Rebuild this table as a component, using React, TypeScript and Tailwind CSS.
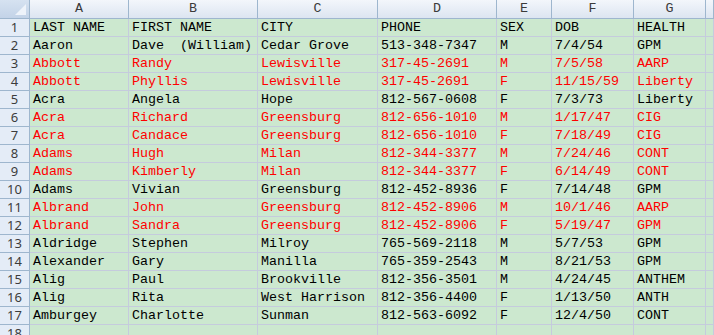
const columns = ['A', 'B', 'C', 'D', 'E', 'F', 'G', ''];

type Row = { cells: string[]; red?: boolean };

const rows: Row[] = [
  { cells: ['LAST NAME', 'FIRST NAME', 'CITY', 'PHONE', 'SEX', 'DOB', 'HEALTH'] },
  { cells: ['Aaron', 'Dave  (William)', 'Cedar Grove', '513-348-7347', 'M', '7/4/54', 'GPM'] },
  { cells: ['Abbott', 'Randy', 'Lewisville', '317-45-2691', 'M', '7/5/58', 'AARP'], red: true },
  { cells: ['Abbott', 'Phyllis', 'Lewisville', '317-45-2691', 'F', '11/15/59', 'Liberty'], red: true },
  { cells: ['Acra', 'Angela', 'Hope', '812-567-0608', 'F', '7/3/73', 'Liberty'] },
  { cells: ['Acra', 'Richard', 'Greensburg', '812-656-1010', 'M', '1/17/47', 'CIG'], red: true },
  { cells: ['Acra', 'Candace', 'Greensburg', '812-656-1010', 'F', '7/18/49', 'CIG'], red: true },
  { cells: ['Adams', 'Hugh', 'Milan', '812-344-3377', 'M', '7/24/46', 'CONT'], red: true },
  { cells: ['Adams', 'Kimberly', 'Milan', '812-344-3377', 'F', '6/14/49', 'CONT'], red: true },
  { cells: ['Adams', 'Vivian', 'Greensburg', '812-452-8936', 'F', '7/14/48', 'GPM'] },
  { cells: ['Albrand', 'John', 'Greensburg', '812-452-8906', 'M', '10/1/46', 'AARP'], red: true },
  { cells: ['Albrand', 'Sandra', 'Greensburg', '812-452-8906', 'F', '5/19/47', 'GPM'], red: true },
  { cells: ['Aldridge', 'Stephen', 'Milroy', '765-569-2118', 'M', '5/7/53', 'GPM'] },
  { cells: ['Alexander', 'Gary', 'Manilla', '765-359-2543', 'M', '8/21/53', 'GPM'] },
  { cells: ['Alig', 'Paul', 'Brookville', '812-356-3501', 'M', '4/24/45', 'ANTHEM'] },
  { cells: ['Alig', 'Rita', 'West Harrison', '812-356-4400', 'F', '1/13/50', 'ANTH'] },
  { cells: ['Amburgey', 'Charlotte', 'Sunman', '812-563-6092', 'F', '12/4/50', 'CONT'] },
  { cells: ['', '', '', '', '', '', ''] },
];

const grid = 'grid grid-cols-[30px_99px_129px_120px_119px_55px_82px_72px_1fr]';

export default function App() {
  return (
    <div className="w-[714px] h-[335px] overflow-hidden bg-[#cce8cf] font-['Liberation_Mono',monospace] text-[13.33px]">
      {/* column headers */}
      <div className={`${grid} h-[19px] bg-gradient-to-b from-[#f3f6fb] to-[#dbe4f0]`}>
        <div className="relative border-r border-b border-[#9eb6ce] bg-gradient-to-b from-[#d6e2f1] to-[#c3d3e8]">
          <div className="absolute right-[3px] bottom-[3px] w-0 h-0 border-l-[11px] border-l-transparent border-b-[11px] border-b-[#eef3fa]" />
        </div>
        {columns.map((c, i) => (
          <div
            key={i}
            className="flex items-center justify-center border-r border-b border-[#9eb6ce] text-[#3a3a3a] leading-none"
          >
            {c}
          </div>
        ))}
      </div>

      {rows.map((row, r) => (
        <div key={r} className={`${grid} h-[18px]`}>
          <div className="flex items-center justify-center border-r border-b border-[#9eb6ce] bg-[#e4ecf7] font-['Noto_Sans',sans-serif] text-[13px] text-[#3c3c3c] leading-none">
            {r + 1}
          </div>
          {[...row.cells, ''].map((cell, i) => (
            <div
              key={i}
              className={`flex items-center pl-[3px] border-r border-b border-[#c5cbdd] whitespace-pre overflow-hidden leading-none ${
                row.red ? 'text-[#ff0000]' : 'text-black'
              }`}
            >
              {cell}
            </div>
          ))}
        </div>
      ))}
    </div>
  );
}
